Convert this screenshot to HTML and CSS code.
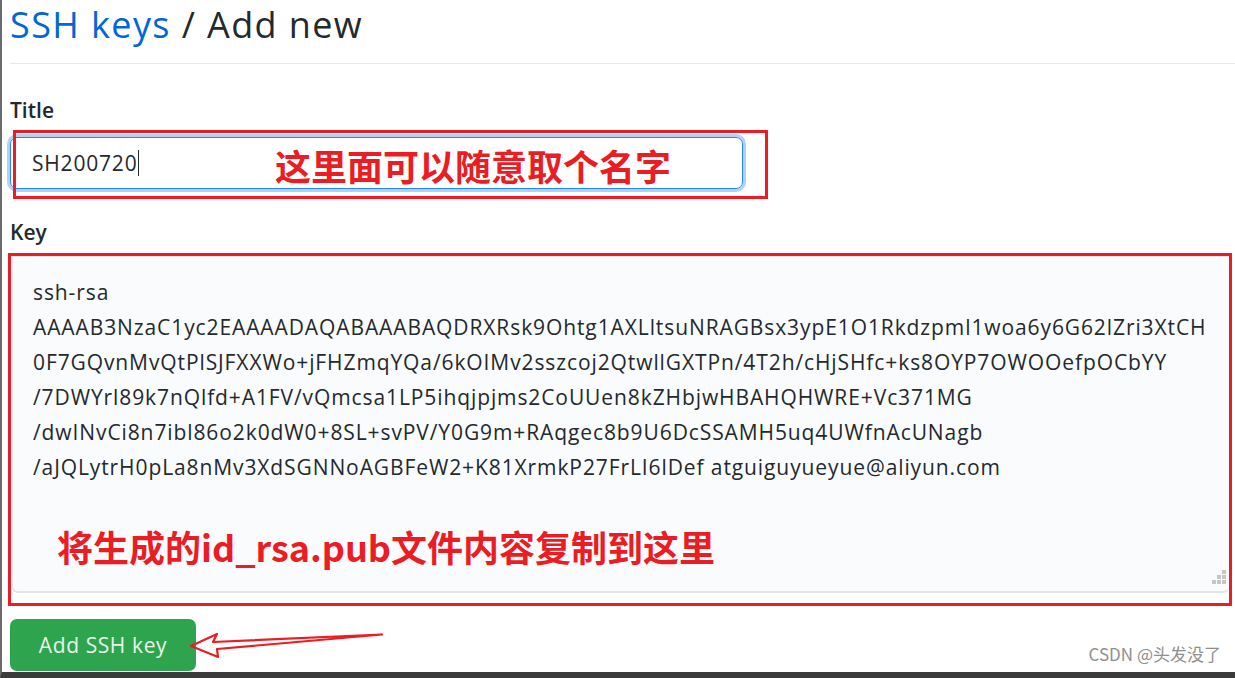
FILE: index.html
```html
<!DOCTYPE html>
<html lang="en">
<head>
  <meta charset="UTF-8" />
  <title>SSH keys / Add new</title>
  <link rel="stylesheet" href="styles.css">
</head>
<body>
  <div class="page">
    <div class="subhead">
      <h1><a href="#">SSH keys</a> / Add new</h1>
    </div>

    <div class="form-group">
      <label>Title</label>
      <div class="field">
        <div class="input">SH200720<span class="caret"></span></div>
        <div class="mark mark-title">
          <span class="note">这里面可以随意取个名字</span>
        </div>
      </div>
    </div>

    <div class="form-group key-group">
      <label>Key</label>
      <div class="mark-key">
        <div class="textarea">
          <div class="key-text">
            <div>ssh-rsa</div>
            <div>AAAAB3NzaC1yc2EAAAADAQABAAABAQDRXRsk9Ohtg1AXLltsuNRAGBsx3ypE1O1Rkdzpml1woa6y6G62lZri3XtCH</div>
            <div>0F7GQvnMvQtPlSJFXXWo+jFHZmqYQa/6kOIMv2sszcoj2QtwllGXTPn/4T2h/cHjSHfc+ks8OYP7OWOOefpOCbYY</div>
            <div>/7DWYrl89k7nQlfd+A1FV/vQmcsa1LP5ihqjpjms2CoUUen8kZHbjwHBAHQHWRE+Vc371MG</div>
            <div>/dwINvCi8n7ibl86o2k0dW0+8SL+svPV/Y0G9m+RAqgec8b9U6DcSSAMH5uq4UWfnAcUNagb</div>
            <div>/aJQLytrH0pLa8nMv3XdSGNNoAGBFeW2+K81XrmkP27FrLI6lDef atguiguyueyue@aliyun.com</div>
          </div>
          <div class="note note-key">将生成的id_rsa.pub文件内容复制到这里</div>
          <svg class="grip" width="16" height="16" viewBox="0 0 16 16">
            <rect x="11" y="1" width="4" height="4" fill="#c6c6c6"/>
            <rect x="6" y="6" width="4" height="4" fill="#c6c6c6"/>
            <rect x="11" y="6" width="4" height="4" fill="#c6c6c6"/>
            <rect x="1" y="11" width="4" height="4" fill="#c6c6c6"/>
            <rect x="6" y="11" width="4" height="4" fill="#c6c6c6"/>
            <rect x="11" y="11" width="4" height="4" fill="#c6c6c6"/>
          </svg>
        </div>
      </div>
    </div>

    <div class="actions">
      <button class="btn-primary">Add SSH key</button>
      <svg class="arrow" width="200" height="30" viewBox="185 628 200 30">
        <polygon points="191,645 217,633 213,641 382,633.5 217,648 218,656" fill="none" stroke="#ea1c24" stroke-width="2.2" stroke-linejoin="round"/>
      </svg>
    </div>

    <div class="watermark">CSDN @头发没了</div>
  </div>
</body>
</html>
```

FILE: styles.css
```css
* {
  margin: 0;
  padding: 0;
  box-sizing: border-box;
}

body {
  font-family: "Open Sans", "Noto Sans CJK SC", sans-serif;
  background-color: #fff;
  color: #24292e;
}

.page {
  position: relative;
  height: 678px;
  padding-left: 8px;
  border-left: 2px solid #6a6a6a;
  border-bottom: 6px solid #3b3b3b;
  overflow: hidden;
}

/* heading */
.subhead {
  padding-bottom: 13px;
  border-bottom: 1px solid #e8e9eb;
}

.subhead h1 {
  font-size: 36px;
  font-weight: 400;
  letter-spacing: 1.4px;
  line-height: 50px;
}

.subhead h1 a {
  color: #0366d6;
  text-decoration: none;
}

/* form */
.form-group {
  margin-top: 31px;
}

.form-group label {
  display: block;
  font-size: 21px;
  font-weight: 600;
  line-height: 30px;
  color: #24292e;
}

.field {
  position: relative;
  margin-top: 12px;
}

.input {
  width: 733px;
  height: 52px;
  padding-left: 21px;
  display: flex;
  align-items: center;
  font-size: 21px;
  letter-spacing: 0.8px;
  color: #24292e;
  border: 1px solid #2188ff;
  border-radius: 7px;
  box-shadow: 0 0 0 3px rgba(3, 102, 214, 0.3);
}

.caret {
  display: inline-block;
  width: 1px;
  height: 26px;
  margin-left: 1px;
  background: #24292e;
}

.mark {
  position: absolute;
  border: 3px solid #ea1c24;
}

.mark-title {
  left: 3px;
  top: -7px;
  width: 755px;
  height: 69px;
  display: flex;
  align-items: center;
  padding-left: 259px;
}

.note {
  font-family: "Noto Sans CJK SC", sans-serif;
  font-weight: 700;
  font-size: 36px;
  color: #ea1c24;
  line-height: 40px;
}

.key-group {
  margin-top: 28px;
}

.mark-key {
  margin-top: 6px;
  margin-left: -2px;
  margin-right: 3px;
  border: 3px solid #ea1c24;
  padding: 0 0 10px 1px;
}

.textarea {
  position: relative;
  height: 337px;
  padding: 18px 20px 0;
  background-color: #fafbfc;
  border: 1px solid #e1e4e8;
  border-bottom: 2px solid #e1e4e8;
  border-right: none;
  border-radius: 0 0 6px 6px;
}

.key-text {
  font-size: 21px;
  line-height: 35px;
  color: #24292e;
  letter-spacing: 0.9px;
}

.note-key {
  margin-top: 41px;
  margin-left: 24px;
}

.grip {
  position: absolute;
  right: 2px;
  bottom: 6px;
}

/* button */
.actions {
  position: relative;
  margin-top: 13px;
}

.btn-primary {
  width: 186px;
  height: 52px;
  font-family: "Open Sans", sans-serif;
  font-size: 21px;
  letter-spacing: 0.6px;
  color: #e6f4e9;
  background-color: #2ea44f;
  border: none;
  border-radius: 7px;
}

.arrow {
  position: absolute;
  left: 175px;
  top: 10px;
}

.watermark {
  position: absolute;
  right: 14px;
  bottom: 6px;
  font-family: "Noto Sans CJK SC", sans-serif;
  font-size: 17px;
  color: #8f8f8f;
}
```
